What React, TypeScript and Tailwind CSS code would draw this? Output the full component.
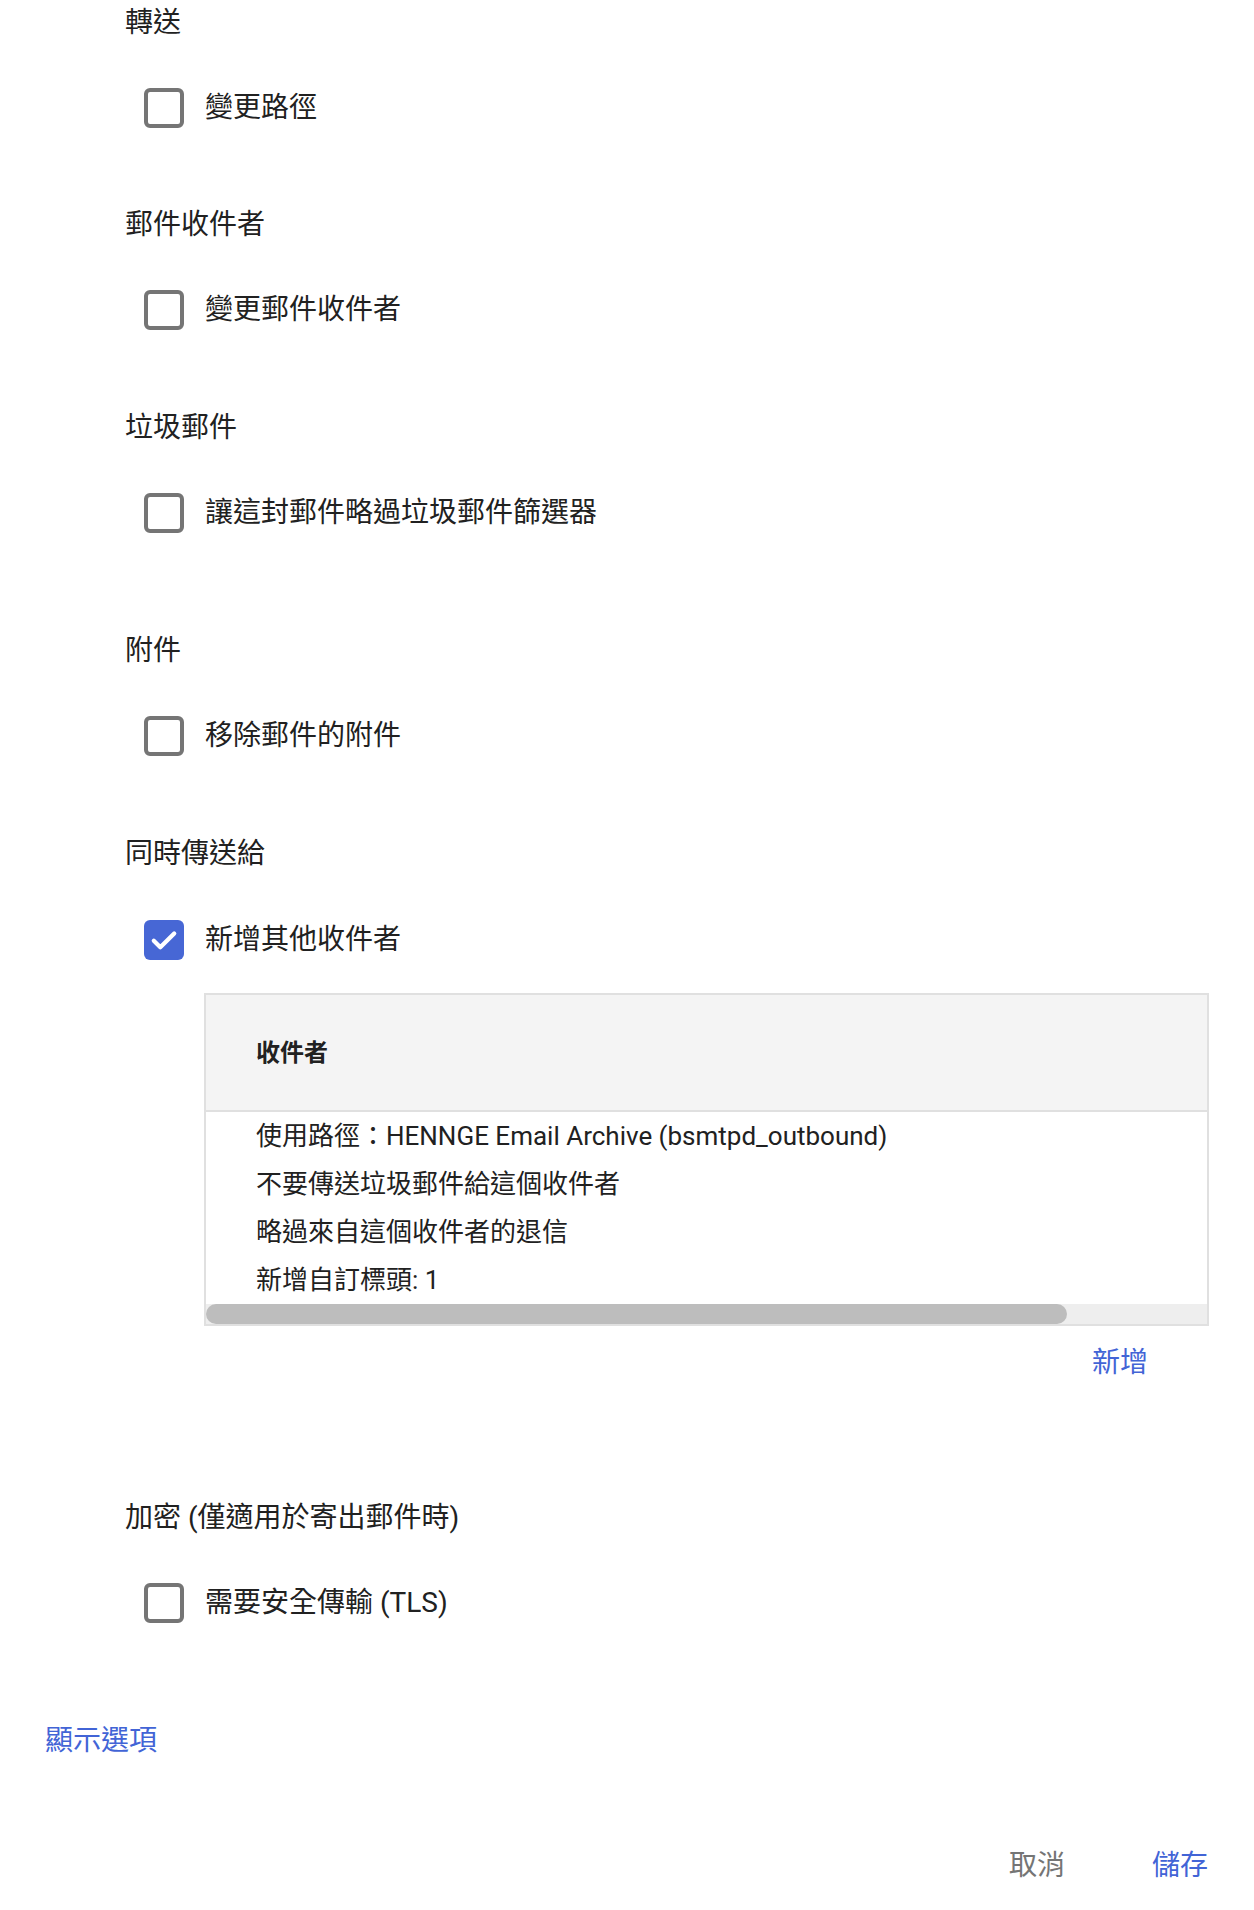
import React from "react";

const FONT = {
    fontFamily:
        'Roboto, "Noto Sans CJK TC", "Noto Sans CJK SC", "Noto Sans", sans-serif',
};

function Checkbox({ checked, label }: { checked?: boolean; label: string }) {
    return (
        <div className="ml-[19px] flex h-10 items-center">
            {checked ? (
                <div className="flex h-10 w-10 items-center justify-center rounded-[6px] bg-[#4767d5]">
                    <svg width="34" height="34" viewBox="0 0 24 24" fill="none">
                        <path
                            d="M4.8 12.6l4.6 4.6L19.2 7.4"
                            stroke="#ffffff"
                            strokeWidth="3"
                            strokeLinecap="round"
                            strokeLinejoin="round"
                        />
                    </svg>
                </div>
            ) : (
                <div className="h-10 w-10 rounded-[6px] border-[4px] border-[#757575] bg-white"></div>
            )}
            <span className="ml-[21px] text-[28px] leading-10 text-[#212121]">
                {label}
            </span>
        </div>
    );
}

function Heading({ children }: { children: React.ReactNode }) {
    return (
        <div className="flex h-[42px] items-center text-[28px] text-[#212121]">
            {children}
        </div>
    );
}

const rows = [
    "使用路徑：HENNGE Email Archive (bsmtpd_outbound)",
    "不要傳送垃圾郵件給這個收件者",
    "略過來自這個收件者的退信",
    "新增自訂標頭: 1",
];

export default function App() {
    return (
        <div className="min-h-[1910px] w-full bg-white pt-[2px]" style={FONT}>
            <div className="pl-[125px] pr-[45px]">
                <Heading>轉送</Heading>
                <div className="mt-[44px]">
                    <Checkbox label="變更路徑" />
                </div>

                <div className="mt-[76px]">
                    <Heading>郵件收件者</Heading>
                </div>
                <div className="mt-[44px]">
                    <Checkbox label="變更郵件收件者" />
                </div>

                <div className="mt-[77px]">
                    <Heading>垃圾郵件</Heading>
                </div>
                <div className="mt-[44px]">
                    <Checkbox label="讓這封郵件略過垃圾郵件篩選器" />
                </div>

                <div className="mt-[97px]">
                    <Heading>附件</Heading>
                </div>
                <div className="mt-[44px]">
                    <Checkbox label="移除郵件的附件" />
                </div>

                <div className="mt-[77px]">
                    <Heading>同時傳送給</Heading>
                </div>
                <div className="mt-[45px]">
                    <Checkbox checked label="新增其他收件者" />
                </div>

                {/* recipients table */}
                <div className="ml-[79px] mt-[33px] border-2 border-[#e0e0e0]">
                    <div className="flex h-[117px] items-center border-b-2 border-[#e0e0e0] bg-[#f4f4f4] pl-[50px] text-[24px] font-bold text-[#212121]">
                        收件者
                    </div>
                    <div className="flex flex-col gap-2 pb-1 pl-[50px] pt-1">
                        {rows.map((r) => (
                            <div
                                key={r}
                                className="whitespace-nowrap text-[26px] leading-10 text-[#212121]"
                            >
                                {r}
                            </div>
                        ))}
                    </div>
                    <div className="h-5 bg-[#eeeeee]">
                        <div className="h-5 w-[86%] rounded-full bg-[#bdbdbd]"></div>
                    </div>
                </div>
                <div className="ml-[79px] mt-[17px] flex justify-end pr-[61px]">
                    <span className="text-[28px] leading-10 text-[#4264d6]">新增</span>
                </div>

                <div className="mt-[114px]">
                    <Heading>加密 (僅適用於寄出郵件時)</Heading>
                </div>
                <div className="mt-[44px]">
                    <Checkbox label="需要安全傳輸 (TLS)" />
                </div>
            </div>

            <div className="mt-[98px] pl-[45px]">
                <span className="text-[28px] leading-10 text-[#4264d6]">顯示選項</span>
            </div>

            <div className="mt-[85px] flex justify-end gap-[87px] pr-[46px]">
                <span className="text-[28px] leading-10 text-[#757575]">取消</span>
                <span className="text-[28px] leading-10 text-[#4264d6]">儲存</span>
            </div>
        </div>
    );
}
